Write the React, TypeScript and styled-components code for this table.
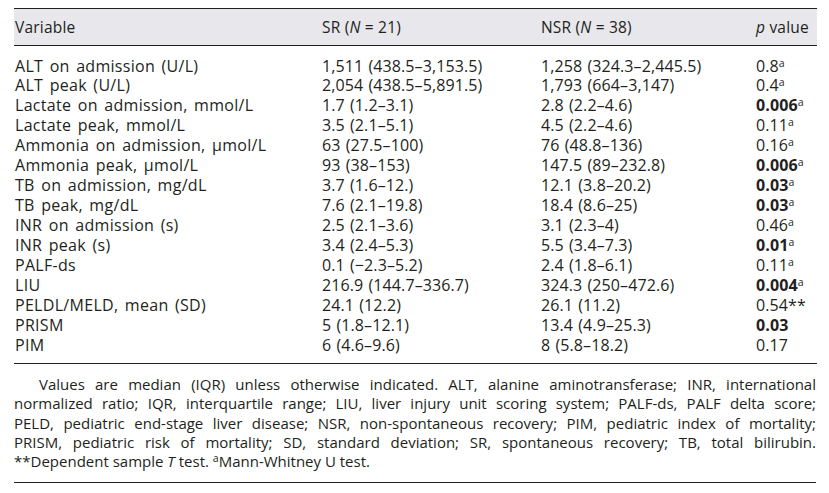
import React from 'react';
import styled, { createGlobalStyle } from 'styled-components';

const Global = createGlobalStyle`
  html, body { margin: 0; padding: 0; background: #ffffff; }
  body { font-family: "Open Sans", "Noto Sans", sans-serif; color: #231f20; }
`;

const Page = styled.div`
  width: 829px;
  height: 493px;
  padding: 8px 13px 0 14px;
  box-sizing: border-box;
`;

const Table = styled.table`
  width: 802px;
  table-layout: fixed;
  border-collapse: collapse;
  border-top: 1.5px solid #231f20;
  border-bottom: 1.5px solid #231f20;
`;

const HeadRow = styled.tr`
  background: #e7e7ec;
  border-bottom: 1.5px solid #231f20;
`;

const Th = styled.th<{ $w: number; $first?: boolean }>`
  width: ${p => p.$w}px;
  height: 36px;
  padding: 0 0 0 ${p => (p.$first ? '1px' : '0')};
  text-align: left;
  font-weight: 400;
  font-size: 15.5px;
  letter-spacing: 0.2px;
  vertical-align: middle;
  white-space: nowrap;
`;

const Spacer = styled.tr<{ $h: number }>`
  height: ${p => p.$h}px;
`;

const Td = styled.td<{ $label?: boolean }>`
  padding: 0 0 0 ${p => (p.$label ? '1px' : '0')};
  height: 19.93px;
  font-size: 16px;
  line-height: 19.93px;
  letter-spacing: ${p => (p.$label ? '0.3px' : '0.1px')};
  word-spacing: ${p => (p.$label ? '2px' : '1px')};
  white-space: nowrap;
`;

const Sig = styled.b`
  font-weight: 700;
`;

const Sup = styled.sup`
  font-size: 10.5px;
  line-height: 0;
  letter-spacing: 0;
  vertical-align: 5px;
`;

const Footer = styled.div`
  width: 802px;
  padding: 11px 0 10px;
  border-bottom: 1.5px solid #231f20;
  font-size: 15px;
  line-height: 19.3px;
`;

const FootLine = styled.div<{ $indent?: boolean; $last?: boolean }>`
  padding-left: ${p => (p.$indent ? '25px' : '0')};
  text-align: ${p => (p.$last ? 'left' : 'justify')};
  text-align-last: ${p => (p.$last ? 'left' : 'justify')};
`;

type Row = [string, string, string, string, boolean, string];

const rows: Row[] = [
  ['ALT on admission (U/L)', '1,511 (438.5–3,153.5)', '1,258 (324.3–2,445.5)', '0.8', false, 'a'],
  ['ALT peak (U/L)', '2,054 (438.5–5,891.5)', '1,793 (664–3,147)', '0.4', false, 'a'],
  ['Lactate on admission, mmol/L', '1.7 (1.2–3.1)', '2.8 (2.2–4.6)', '0.006', true, 'a'],
  ['Lactate peak, mmol/L', '3.5 (2.1–5.1)', '4.5 (2.2–4.6)', '0.11', false, 'a'],
  ['Ammonia on admission, µmol/L', '63 (27.5–100)', '76 (48.8–136)', '0.16', false, 'a'],
  ['Ammonia peak, µmol/L', '93 (38–153)', '147.5 (89–232.8)', '0.006', true, 'a'],
  ['TB on admission, mg/dL', '3.7 (1.6–12.)', '12.1 (3.8–20.2)', '0.03', true, 'a'],
  ['TB peak, mg/dL', '7.6 (2.1–19.8)', '18.4 (8.6–25)', '0.03', true, 'a'],
  ['INR on admission (s)', '2.5 (2.1–3.6)', '3.1 (2.3–4)', '0.46', false, 'a'],
  ['INR peak (s)', '3.4 (2.4–5.3)', '5.5 (3.4–7.3)', '0.01', true, 'a'],
  ['PALF-ds', '0.1 (−2.3–5.2)', '2.4 (1.8–6.1)', '0.11', false, 'a'],
  ['LIU', '216.9 (144.7–336.7)', '324.3 (250–472.6)', '0.004', true, 'a'],
  ['PELDL/MELD, mean (SD)', '24.1 (12.2)', '26.1 (11.2)', '0.54**', false, ''],
  ['PRISM', '5 (1.8–12.1)', '13.4 (4.9–25.3)', '0.03', true, ''],
  ['PIM', '6 (4.6–9.6)', '8 (5.8–18.2)', '0.17', false, ''],
];

export default function App() {
  return (
    <Page>
      <Global />
      <Table>
        <thead>
          <HeadRow>
            <Th $w={307} $first>Variable</Th>
            <Th $w={219}>SR (<i>N</i> = 21)</Th>
            <Th $w={215}>NSR (<i>N</i> = 38)</Th>
            <Th $w={61}><i>p</i> value</Th>
          </HeadRow>
        </thead>
        <tbody>
          <Spacer $h={11}><td colSpan={4} /></Spacer>
          {rows.map(([name, sr, nsr, p, bold, sup]) => (
            <tr key={name}>
              <Td $label>{name}</Td>
              <Td>{sr}</Td>
              <Td>{nsr}</Td>
              <Td>
                {bold ? <Sig>{p}</Sig> : p}
                {sup && <Sup>{sup}</Sup>}
              </Td>
            </tr>
          ))}
          <Spacer $h={8}><td colSpan={4} /></Spacer>
        </tbody>
      </Table>
      <Footer>
        <FootLine $indent>
          Values are median (IQR) unless otherwise indicated. ALT, alanine aminotransferase; INR, international
        </FootLine>
        <FootLine>
          normalized ratio; IQR, interquartile range; LIU, liver injury unit scoring system; PALF-ds, PALF delta score;
        </FootLine>
        <FootLine>
          PELD, pediatric end-stage liver disease; NSR, non-spontaneous recovery; PIM, pediatric index of mortality;
        </FootLine>
        <FootLine>
          PRISM, pediatric risk of mortality; SD, standard deviation; SR, spontaneous recovery; TB, total bilirubin.
        </FootLine>
        <FootLine $last>
          **Dependent sample <i>T</i> test. <Sup>a</Sup>Mann-Whitney U test.
        </FootLine>
      </Footer>
    </Page>
  );
}
